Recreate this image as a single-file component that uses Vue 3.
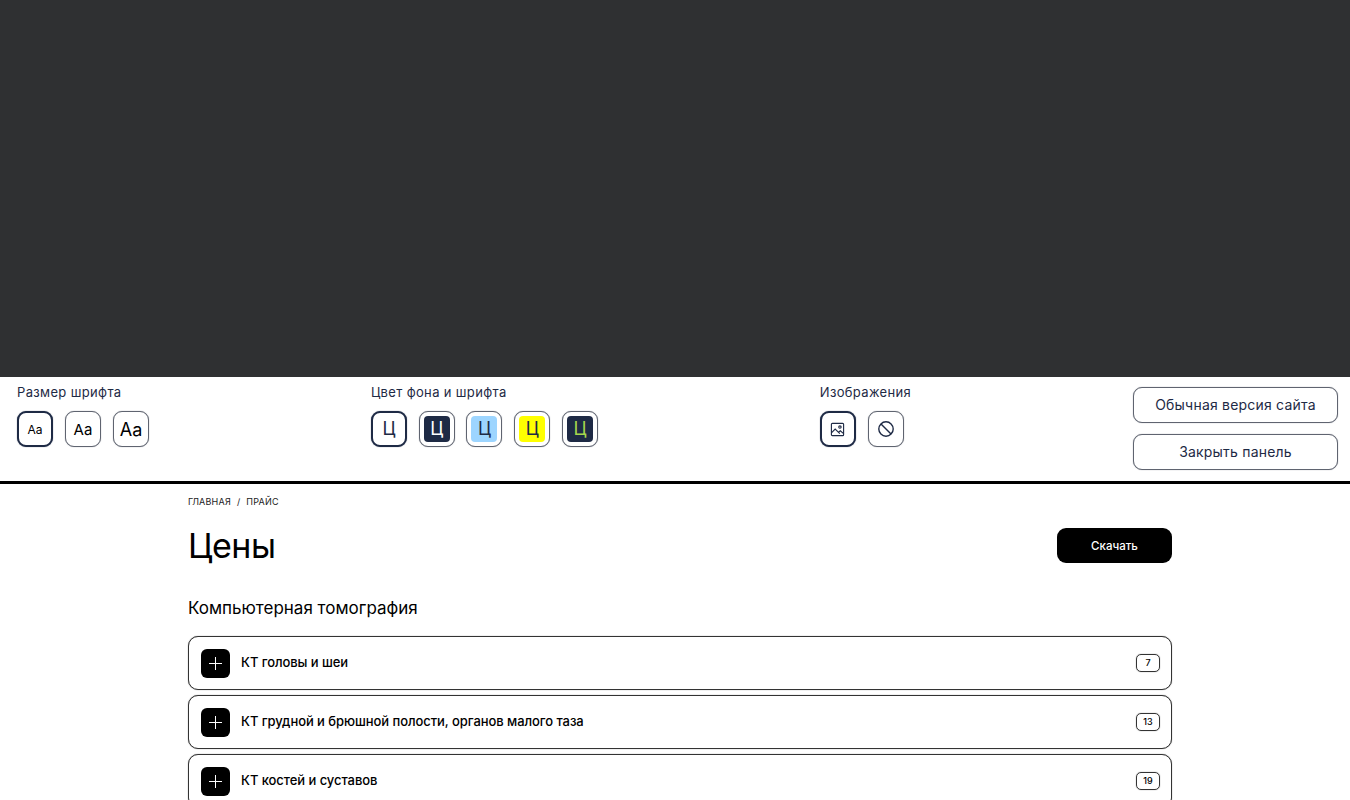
<script setup>
const sizes = [
  { cls: 'fs-s', active: true },
  { cls: 'fs-m', active: false },
  { cls: 'fs-l', active: false },
]
const colors = [
  { cls: 'c-white', active: true },
  { cls: 'c-navy', active: false },
  { cls: 'c-blue', active: false },
  { cls: 'c-yellow', active: false },
  { cls: 'c-green', active: false },
]
const rows = [
  { title: 'КТ головы и шеи', count: 7 },
  { title: 'КТ грудной и брюшной полости, органов малого таза', count: 13 },
  { title: 'КТ костей и суставов', count: 19 },
]
</script>

<template>
  <div class="page">
    <div class="dark"></div>
    <section class="panel">
      <div class="group">
        <div class="label">Размер шрифта</div>
        <div class="opts">
          <button v-for="s in sizes" :key="s.cls" class="opt" :class="[s.cls, { active: s.active }]">Aa</button>
        </div>
      </div>
      <div class="group">
        <div class="label">Цвет фона и шрифта</div>
        <div class="opts tight">
          <button v-for="c in colors" :key="c.cls" class="opt" :class="{ active: c.active }">
            <span class="swatch" :class="c.cls">Ц</span>
          </button>
        </div>
      </div>
      <div class="group">
        <div class="label">Изображения</div>
        <div class="opts">
          <button class="opt active">
            <svg width="15" height="15" viewBox="0 0 16 16" fill="none" stroke="#1e2a45" stroke-width="1.2">
              <rect x="1.5" y="1.5" width="13" height="13" rx="1" />
              <circle cx="10.6" cy="5.4" r="1.3" />
              <path d="M1.5 11.5 5.5 7.5 10.5 12.5M9 11l2-1.6 3.5 3" />
            </svg>
          </button>
          <button class="opt">
            <svg width="18" height="18" viewBox="0 0 18 18" fill="none" stroke="#1e2a45" stroke-width="1.4">
              <circle cx="9" cy="9" r="7.2" />
              <path d="M4 4l10 10" />
            </svg>
          </button>
        </div>
      </div>
      <div class="actions">
        <button class="wide">Обычная версия сайта</button>
        <button class="wide">Закрыть панель</button>
      </div>
    </section>

    <main class="content">
      <nav class="crumbs"><span>ГЛАВНАЯ</span><span>/</span><span>ПРАЙС</span></nav>
      <header class="head">
        <h1>Цены</h1>
        <button class="download">Скачать</button>
      </header>
      <h2>Компьютерная томография</h2>
      <div class="list">
        <div v-for="r in rows" :key="r.title" class="row">
          <span class="plus">
            <svg width="13" height="13" viewBox="0 0 13 13" stroke="#fff" stroke-width="1">
              <path d="M6.5 0v13M0 6.5h13" />
            </svg>
          </span>
          <span class="title">{{ r.title }}</span>
          <span class="count">{{ r.count }}</span>
        </div>
      </div>
    </main>
  </div>
</template>

<style>
html, body { margin: 0; background: #fff; overflow: hidden; }
</style>

<style scoped>
.page { height: 800px; overflow: hidden; font-family: Inter, "Noto Sans", sans-serif; color: #000; }
.dark { height: 377px; background: #2f3032; }
.panel {
  height: 104px; box-sizing: content-box; display: flex; justify-content: space-between;
  padding: 0 12px 0 17px; border-bottom: 3px solid #000; background: #fff;
}
.group { padding-top: 7px; }
.label { font-size: 13px; line-height: 17px; letter-spacing: 0.35px; color: #1e2a45; margin-bottom: 10px; white-space: nowrap; }
.opts { display: flex; gap: 12px; }
.opts.tight { gap: 11.75px; }
.opt {
  width: 36px; height: 36px; box-sizing: border-box; padding: 0; display: flex; align-items: center; justify-content: center;
  background: #fff; border: 1px solid #5f6470; box-shadow: 0 0 1px rgba(60, 65, 80, 0.6); border-radius: 9px; font-family: inherit; color: #000;
}
.opt.active { border: 2px solid #1e2a45; box-shadow: 0 0 1px rgba(30, 42, 69, 0.7); }
.fs-s { font-size: 12px; }
.fs-m { font-size: 15px; }
.fs-l { font-size: 18px; }
.swatch {
  width: 26px; height: 26px; border-radius: 4px; display: flex; align-items: center; justify-content: center;
  font-size: 18px; line-height: 26px;
}
.c-white { color: #1e2a45; background: #fff; }
.c-navy { color: #fff; background: #1e2a45; }
.c-blue { color: #1e2a45; background: #9dd5ff; }
.c-yellow { color: #1e2a45; background: #ffff00; }
.c-green { color: #a5d64c; background: #1e2a45; }
.actions { display: flex; flex-direction: column; gap: 11px; padding-top: 10px; }
.wide {
  width: 205px; height: 36px; box-sizing: border-box; background: #fff; border: 1px solid #5f6470; box-shadow: 0 0 1px rgba(60, 65, 80, 0.6); border-radius: 9px;
  font-family: inherit; font-size: 14px; letter-spacing: 0.2px; color: #1e2a45; padding: 0 0 1px;
}
.content { width: 984px; margin-left: 188px; }
.crumbs { display: flex; gap: 6px; padding-top: 12px; font-size: 9px; line-height: 11px; letter-spacing: 0.2px; font-weight: 400; color: #222; }
.head { display: flex; justify-content: space-between; align-items: center; margin-top: 21px; height: 35px; }
h1 { margin: 0; font-size: 34px; line-height: 42px; font-weight: 400; letter-spacing: -0.5px; }
.download {
  width: 115px; height: 35px; background: #000; color: #fff; border: 0; border-radius: 9px;
  font-family: inherit; font-size: 11.5px; font-weight: 500; padding: 0;
}
h2 { margin: 34px 0 0; font-size: 17px; line-height: 22px; font-weight: 400; }
.list { display: flex; flex-direction: column; gap: 5px; margin-top: 17px; }
.row {
  height: 54px; box-sizing: border-box; display: flex; align-items: center; padding: 0 11px 0 12px;
  border: 1px solid #333; box-shadow: 0 0 1px rgba(0, 0, 0, 0.6); border-radius: 10px; background: #fff;
}
.plus { width: 29px; height: 29px; background: #000; border-radius: 6px; display: flex; align-items: center; justify-content: center; }
.title { margin-left: 11px; flex: 1; font-size: 13px; line-height: 16px; letter-spacing: -0.06px; font-weight: 500; padding-bottom: 2px; }
.count {
  width: 24px; height: 18px; box-sizing: border-box; border: 1px solid #333; box-shadow: 0 0 1px rgba(0, 0, 0, 0.6); border-radius: 5px;
  display: flex; align-items: center; justify-content: center; font-size: 9px; font-weight: 500; margin-bottom: 1px;
}
</style>
